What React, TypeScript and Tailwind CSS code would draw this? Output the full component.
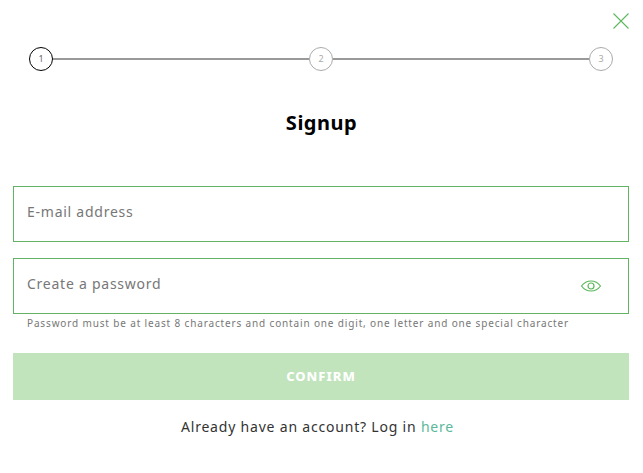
function Step({ n, active = false }: { n: number; active?: boolean }) {
  return (
    <div
      className={`flex h-6 w-6 shrink-0 items-center justify-center rounded-full border text-[9px] ${
        active ? 'border-black text-[#666]' : 'border-[#aaa] text-[#aaa]'
      }`}
    >
      {n}
    </div>
  );
}

function Line() {
  return <div className="h-0.5 flex-1 bg-[#999]"></div>;
}

export default function App() {
  return (
    <div className="h-[473px] w-[643px] overflow-hidden bg-white" style={{ fontFamily: '"Noto Sans", sans-serif' }}>
      <div className="flex h-[47px] justify-end pt-[13px] pr-[14px]">
        <button className="h-4 w-4 text-[#5cb85c]">
          <svg className="h-4 w-4" viewBox="0 0 16 16" fill="none" stroke="currentColor" strokeWidth={1.1}>
            <path d="M0.5 0.500 15.500 15.500M15.500 0.500 0.500 15.500" />
          </svg>
        </button>
      </div>

      {/* Stepper */}
      <div className="flex items-center pr-[30px] pl-[29px]">
        <Step n={1} active />
        <Line />
        <Step n={2} />
        <Line />
        <Step n={3} />
      </div>

      <h1 className="mt-[40px] text-center text-xl leading-6 font-bold tracking-[0.5px] text-black">Signup</h1>

      {/* Form */}
      <form className="mt-[51px] pr-[14px] pl-[13px]">
        <input
          type="text"
          placeholder="E-mail address"
          className="block h-14 w-full border border-[#64b264] px-[13px] pb-1.5 text-sm tracking-[0.75px] text-[#777] outline-none placeholder:text-[#777]"
        />
        <div className="relative mt-4">
          <input
            type="password"
            placeholder="Create a password"
            className="block h-14 w-full border border-[#64b264] px-[13px] pb-1.5 text-sm tracking-[0.75px] text-[#777] outline-none placeholder:text-[#777]"
          />
          <svg
            className="absolute top-[18px] right-[28px] h-[20px] w-[20px] text-[#5cb85c]"
            viewBox="0 0 20 20"
            fill="none"
            stroke="currentColor"
            strokeWidth={1.2}
          >
            <path d="M0.5 10C3 6.600 6.300 5 10 5s7 1.600 9.500 5c-2.500 3.400-5.800 5-9.500 5s-7-1.600-9.500-5z" />
            <circle cx="10" cy="10" r="3" />
          </svg>
        </div>
        <p className="mt-[2px] pl-[14px] text-[10px] leading-[15px] tracking-[0.85px] whitespace-nowrap text-[#777]">
          Password must be at least 8 characters and contain one digit, one letter and one special character
        </p>
        <button
          type="button"
          className="mt-[22px] flex h-[47px] w-full items-center justify-center bg-[#c1e4bc] text-[13px] font-extrabold tracking-[1px] text-white"
        >
          CONFIRM
        </button>
        <p className="mt-[17px] pr-[7px] text-center text-sm leading-5 tracking-[0.8px] text-[#333]">
          Already have an account? Log in <a className="text-[#5cb89c]">here</a>
        </p>
      </form>
    </div>
  );
}
